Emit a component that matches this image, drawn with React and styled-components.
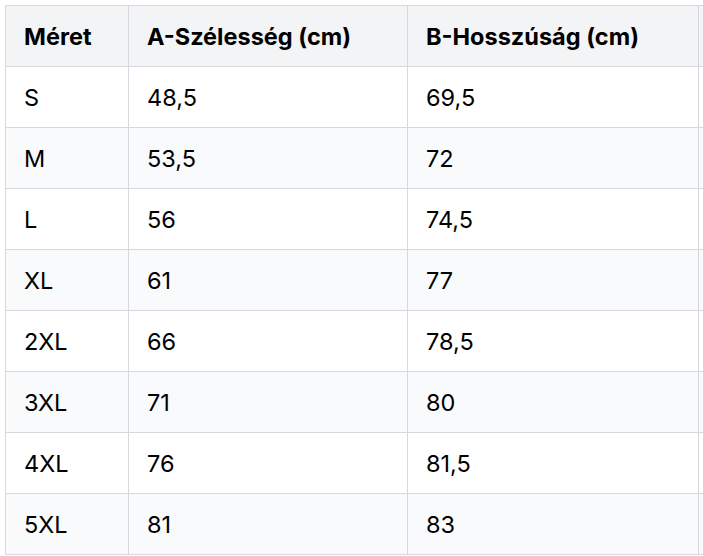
import styled, { createGlobalStyle } from "styled-components";

const GlobalStyle = createGlobalStyle`
    body {
        margin: 0;
        background: #ffffff;
        overflow: hidden;
        font-family: "Inter", "Liberation Sans", sans-serif;
    }
`

const Wrap = styled.div`
    padding: 5px 0 0 5px;
    width: 1200px;
`

const Table = styled.table`
    border-collapse: collapse;
    table-layout: fixed;
    width: 985px;
    color: #000000;
    font-size: 23.5px;
`

const HeadCell = styled.th`
    background-color: #f3f4f6;
    border: 1px solid #d6d8de;
    height: 61px;
    padding: 0 18px;
    text-align: left;
    font-weight: 700;
    box-sizing: border-box;
`

const Row = styled.tr`
    background-color: ${p => (p.$striped ? "#f9fafb" : "#ffffff")};
`

const Cell = styled.td`
    border: 1px solid #d6d8de;
    height: 61px;
    padding: 0 18px;
    box-sizing: border-box;
`

const rows = [
    ["S", "48,5", "69,5"],
    ["M", "53,5", "72"],
    ["L", "56", "74,5"],
    ["XL", "61", "77"],
    ["2XL", "66", "78,5"],
    ["3XL", "71", "80"],
    ["4XL", "76", "81,5"],
    ["5XL", "81", "83"],
]

export default function App() {
    return (
        <>
            <GlobalStyle />
            <Wrap>
                <Table>
                    <colgroup>
                        <col style={{ width: 123 }} />
                        <col style={{ width: 279 }} />
                        <col style={{ width: 291 }} />
                        <col style={{ width: 292 }} />
                    </colgroup>
                    <thead>
                        <tr>
                            <HeadCell>Méret</HeadCell>
                            <HeadCell>A-Szélesség (cm)</HeadCell>
                            <HeadCell>B-Hosszúság (cm)</HeadCell>
                            <HeadCell></HeadCell>
                        </tr>
                    </thead>
                    <tbody>
                        {rows.map((r, i) => (
                            <Row key={r[0]} $striped={i % 2 === 1}>
                                <Cell>{r[0]}</Cell>
                                <Cell>{r[1]}</Cell>
                                <Cell>{r[2]}</Cell>
                                <Cell></Cell>
                            </Row>
                        ))}
                    </tbody>
                </Table>
            </Wrap>
        </>
    )
}
